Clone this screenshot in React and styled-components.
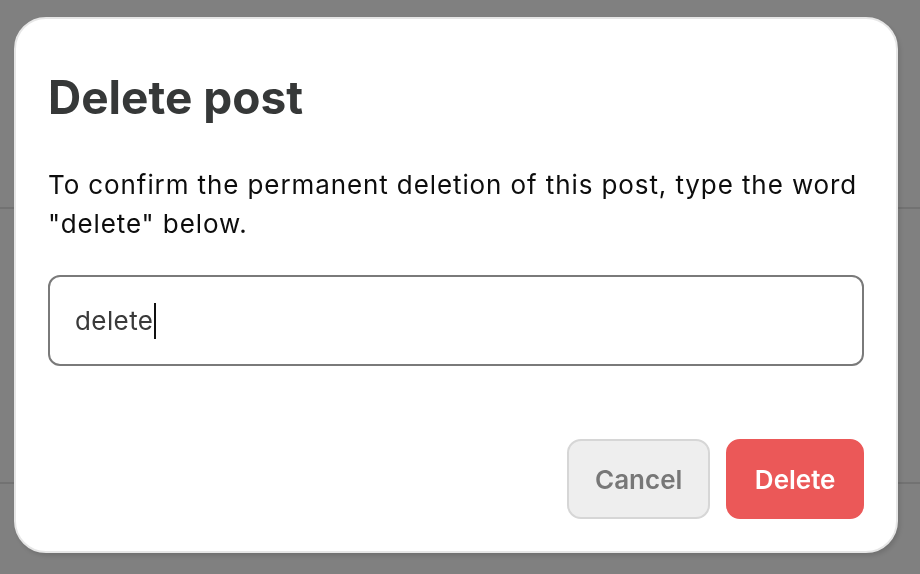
import React from "react";
import styled, { createGlobalStyle } from "styled-components";

const Global = createGlobalStyle`
  html, body { margin: 0; padding: 0; }
  body {
    width: 920px;
    height: 574px;
    overflow: hidden;
    font-family: Inter, "Noto Sans", sans-serif;
    background: #808080;
  }
`;

const Page = styled.div`
  width: 920px;
  height: 574px;
  background: #808080;
  display: flex;
  flex-direction: column;
`;

const Section = styled.div`
  height: ${(p) => p.$h}px;
  border-bottom: 2px solid #727272;
  flex-shrink: 0;
`;

const Overlay = styled.div`
  position: fixed;
  inset: 0;
  padding: 17px 0 0 14px;
  display: flex;
  align-items: flex-start;
`;

const Dialog = styled.div`
  box-sizing: border-box;
  width: 884px;
  height: 536px;
  background: #fff;
  border: 2px solid #e6e6e6;
  border-radius: 32px;
  box-shadow: 2px 3px 4px rgba(0, 0, 0, 0.12);
  padding: 0 32px;
  display: flex;
  flex-direction: column;
`;

const Title = styled.h1`
  margin: 51px 0 0 0;
  font-size: 46px;
  line-height: 54px;
  font-weight: 700;
  color: #363838;
`;

const Message = styled.p`
  margin: 41px 0 0 0;
  font-size: 26px;
  line-height: 39px;
  letter-spacing: 0.9px;
  color: #0d0d0d;
`;

const Field = styled.div`
  box-sizing: border-box;
  margin-top: 32px;
  height: 91px;
  border: 2px solid #7a7a7a;
  border-radius: 12px;
  display: flex;
  align-items: center;
  padding: 0 25px;
  font-size: 26px;
  letter-spacing: 0.4px;
  color: #3a3a3a;
`;

const Caret = styled.span`
  display: inline-block;
  width: 2px;
  height: 36px;
  background: #111;
  margin-left: 1px;
  vertical-align: middle;
`;

const Actions = styled.div`
  margin-top: 73px;
  display: flex;
  justify-content: flex-end;
  gap: 16px;
`;

const Button = styled.button`
  box-sizing: border-box;
  height: 80px;
  padding: 0 ${(p) => (p.$danger ? 26.5 : 26)}px;
  border-radius: 14px;
  font-family: Inter, "Noto Sans", sans-serif;
  font-size: 26px;
  font-weight: 600;
  border: 2px solid ${(p) => (p.$danger ? "#eb5858" : "#d6d6d6")};
  background: ${(p) => (p.$danger ? "#eb5858" : "#eeeeee")};
  color: ${(p) => (p.$danger ? "#ffffff" : "#777777")};
`;

export default function App() {
  return (
    <>
      <Global />
      <Page>
        <Section $h={207} />
        <Section $h={273} />
      </Page>
      <Overlay>
        <Dialog>
          <Title>Delete post</Title>
          <Message>
            To confirm the permanent deletion of this post, type the word "delete" below.
          </Message>
          <Field>
            <span>delete</span>
            <Caret />
          </Field>
          <Actions>
            <Button>Cancel</Button>
            <Button $danger>Delete</Button>
          </Actions>
        </Dialog>
      </Overlay>
    </>
  );
}
